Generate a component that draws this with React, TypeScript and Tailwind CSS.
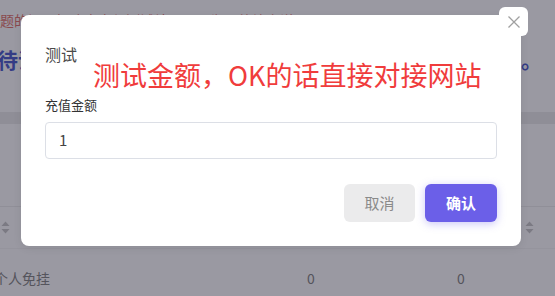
import React from "react";

function SortIcon() {
  return (
    <svg width="9" height="13" viewBox="0 0 9 13" fill="#7b7a83">
      <path d="M4.5 0.5 L8.5 5 L0.5 5 Z" />
      <path d="M4.5 12.5 L8.5 8 L0.5 8 Z" />
    </svg>
  );
}

export default function App() {
  return (
    <div className="relative w-[555px] h-[296px] overflow-hidden bg-[#9a99a2] font-['Noto_Sans_CJK_SC','Liberation_Sans',sans-serif]">
      {/* background page (dimmed) */}
      <div className="flex flex-col">
        <div className="h-[40px] flex items-center text-[14px] text-[#8a4a4e] whitespace-nowrap overflow-hidden">
          <span className="-ml-[14px]">问题的问题解决方案与测试结果显示为：待补充说明</span>
        </div>
        <div className="h-[40px] flex items-center text-[21px] font-bold text-[#343c85] whitespace-nowrap overflow-hidden">
          <span className="-ml-[3px] flex-1 overflow-hidden">待说明的充值测试流程请确认后进行对接</span>
          <span className="mr-[13px]">。</span>
        </div>
        <div className="h-[32px]" />
        <div className="h-[12px] bg-[#8f8e97]" />
        <div className="h-[83px] border-b border-[#908f98]" />
        <div className="h-[42px] flex items-center justify-between border-b border-[#95949d] pl-[1px] pr-[21px]">
          <SortIcon />
          <SortIcon />
        </div>
        <div className="h-[52px] pt-[6px] flex items-center text-[14px] text-[#55545c] whitespace-nowrap">
          <span className="-ml-[6px] w-[313px]">个人免挂</span>
          <span className="w-[150px]">0</span>
          <span>0</span>
        </div>
      </div>

      {/* modal */}
      <div className="absolute left-[21px] top-[15px] w-[500px] h-[231px] bg-white rounded-[8px] shadow-[0_2px_8px_rgba(0,0,0,0.08)] flex flex-col px-6 pt-[27px]">
        <div className="text-[16px] leading-[24px] text-[#4a4a4a]">测试</div>
        <div className="mt-[29px] text-[13px] leading-[20px] text-[#333]">充值金额</div>
        <div className="mt-[7px] h-[37px] border border-[#dcdfe6] rounded-[4px] flex items-center px-[13px] text-[15px] text-[#444]">
          1
        </div>
        <div className="mt-[25px] flex justify-end gap-[10px]">
          <button className="w-[71px] h-[38px] rounded-[6px] bg-[#ebebec] text-[15px] text-[#8a8a8a]">
            取消
          </button>
          <button className="w-[72px] h-[38px] rounded-[6px] bg-[#6b5fe8] text-[15px] font-semibold text-white shadow-[0_2px_8px_rgba(107,95,232,0.35)]">
            确认
          </button>
        </div>

        {/* red annotation */}
        <div className="absolute left-[72px] top-[43px] text-[27px] leading-[34px] text-[#f03c3c] whitespace-nowrap">
          测试金额，OK的话直接对接网站
        </div>
      </div>

      {/* close button */}
      <button className="absolute left-[499px] top-[7px] w-[29px] h-[29px] rounded-[6px] bg-white flex items-center justify-center">
        <svg width="14" height="14" viewBox="0 0 14 14" fill="none" stroke="#a0a0a0" strokeWidth="1.3">
          <path d="M1.5 1.5 L12.5 12.5 M12.5 1.5 L1.5 12.5" />
        </svg>
      </button>
    </div>
  );
}
